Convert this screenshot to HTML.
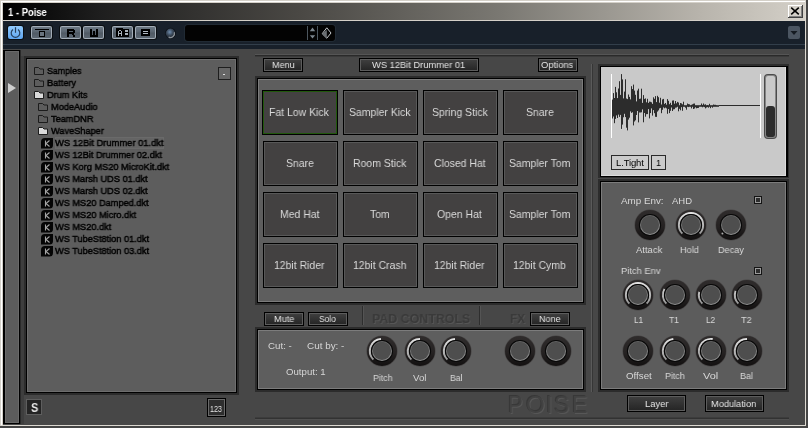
<!DOCTYPE html>
<html><head><meta charset="utf-8"><title>Poise</title>
<style>
html,body{margin:0;padding:0;}
body{width:808px;height:428px;overflow:hidden;position:relative;background:#d4d0c8;font-family:"Liberation Sans",sans-serif;}
div{position:absolute;}
.t{position:absolute;white-space:nowrap;transform-origin:0 0;will-change:transform;}
.k{position:absolute;}
</style></head><body>
<svg width="0" height="0" style="position:absolute"><defs>
<linearGradient id="ring" x1="0" y1="0" x2="0" y2="1"><stop offset="0" stop-color="#2f2c2c"/><stop offset="0.55" stop-color="#252222"/><stop offset="1" stop-color="#121010"/></linearGradient>
<linearGradient id="arc" gradientUnits="userSpaceOnUse" x1="0" y1="4" x2="0" y2="30"><stop offset="0" stop-color="#e6e6e6"/><stop offset="1" stop-color="#8a8a8a"/></linearGradient>
<linearGradient id="rim" x1="0" y1="0" x2="0.3" y2="1"><stop offset="0" stop-color="#606060"/><stop offset="1" stop-color="#8e8e8e"/></linearGradient>
</defs></svg>
<div style="left:1px;top:1px;width:806px;height:1px;background:#fff;"></div>
<div style="left:1px;top:1px;width:1px;height:426px;background:#fff;"></div>
<div style="left:805px;top:1px;width:1px;height:425px;background:#dcd8d0;"></div>
<div style="left:1px;top:425px;width:805px;height:1px;background:#dcd8d0;"></div>
<div style="left:806px;top:0px;width:2px;height:428px;background:#454545;"></div>
<div style="left:0px;top:426px;width:808px;height:2px;background:#454545;"></div>
<div style="left:3px;top:3px;width:802px;height:17px;background:linear-gradient(90deg,#000 0%,#1e1e1e 12%,#4a4844 37%,#7a7872 62%,#b8b4ac 87%,#d4d0c8 100%);"></div>
<span class="t" style="left:8.20px;top:6.69px;font-size:11px;line-height:11px;color:#fff;font-weight:bold;transform:scaleX(0.8577);">1 - Poise</span>
<div style="left:788px;top:5px;width:15px;height:13px;background:#404040;"></div>
<div style="left:788px;top:5px;width:14px;height:12px;background:#fff;"></div>
<div style="left:789px;top:6px;width:13px;height:11px;background:#808080;"></div>
<div style="left:789px;top:6px;width:12px;height:10px;background:#d4d0c8;"></div>
<svg class="k" style="left:790px;top:7px" width="10" height="8" viewBox="0 0 10 8"><path d="M1.2 0.6L8.8 7.4M8.8 0.6L1.2 7.4" stroke="#000" stroke-width="1.5"/></svg>
<div style="left:3px;top:21px;width:802px;height:28px;background:#18202a;"></div>
<div style="left:3px;top:44px;width:802px;height:1px;background:#323e4a;"></div>
<div style="left:7px;top:25px;width:17px;height:15px;background:#0a0e12;border-radius:3px;"></div>
<div style="left:8px;top:26px;width:15px;height:13px;background:linear-gradient(#92cafc,#5ea6f2);border-radius:2px;"></div>
<svg class="k" style="left:8px;top:26px" width="15" height="13" viewBox="0 0 15 13"><path d="M5 3.6A4.3 4.3 0 1 0 10 3.6" stroke="#26405e" stroke-width="1.2" fill="none"/><path d="M7.5 1.2V6.8" stroke="#26405e" stroke-width="1.2"/></svg>
<div style="left:30px;top:25px;width:23px;height:15px;background:#0a0e12;border-radius:3px;"></div>
<div style="left:31px;top:26px;width:21px;height:13px;background:#a2acb6;border-radius:2px;"></div>
<div style="left:32px;top:27px;width:19px;height:11px;background:linear-gradient(#6c7884 0%,#5a6570 45%,#505a64 55%,#5c6772 100%);border-radius:1px;"></div>
<svg class="k" style="left:0;top:0" width="808" height="60" viewBox="0 0 808 60" shape-rendering="crispEdges"><rect x="35" y="29" width="14" height="1" fill="#000"/><rect x="39" y="31" width="6" height="6" fill="#000"/></svg>
<svg class="k" style="left:0;top:0" width="808" height="60" viewBox="0 0 808 60" shape-rendering="crispEdges"><rect x="40" y="32" width="4" height="4" fill="#6a747e"/></svg>
<div style="left:59px;top:25px;width:23px;height:15px;background:#0a0e12;border-radius:3px;"></div>
<div style="left:60px;top:26px;width:21px;height:13px;background:#a2acb6;border-radius:2px;"></div>
<div style="left:61px;top:27px;width:19px;height:11px;background:linear-gradient(#6c7884 0%,#5a6570 45%,#505a64 55%,#5c6772 100%);border-radius:1px;"></div>
<svg class="k" style="left:0;top:0" width="808" height="60" viewBox="0 0 808 60" shape-rendering="crispEdges"><rect x="67" y="29" width="7" height="2" fill="#000"/><rect x="67" y="31" width="2" height="6" fill="#000"/><rect x="73" y="30" width="2" height="3" fill="#000"/><rect x="69" y="32" width="5" height="2" fill="#000"/><rect x="72" y="34" width="2" height="1" fill="#000"/><rect x="73" y="35" width="2" height="2" fill="#000"/></svg>
<div style="left:82px;top:25px;width:23px;height:15px;background:#0a0e12;border-radius:3px;"></div>
<div style="left:83px;top:26px;width:21px;height:13px;background:#a2acb6;border-radius:2px;"></div>
<div style="left:84px;top:27px;width:19px;height:11px;background:linear-gradient(#6c7884 0%,#5a6570 45%,#505a64 55%,#5c6772 100%);border-radius:1px;"></div>
<svg class="k" style="left:0;top:0" width="808" height="60" viewBox="0 0 808 60" shape-rendering="crispEdges"><rect x="90" y="29" width="2" height="8" fill="#000"/><rect x="96" y="29" width="2" height="8" fill="#000"/><rect x="93" y="31" width="2" height="5" fill="#000"/><rect x="90" y="35" width="8" height="2" fill="#000"/></svg>
<div style="left:111px;top:25px;width:23px;height:15px;background:#0a0e12;border-radius:3px;"></div>
<div style="left:112px;top:26px;width:21px;height:13px;background:#a2acb6;border-radius:2px;"></div>
<div style="left:113px;top:27px;width:19px;height:11px;background:linear-gradient(#6c7884 0%,#5a6570 45%,#505a64 55%,#5c6772 100%);border-radius:1px;"></div>
<svg class="k" style="left:0;top:0" width="808" height="60" viewBox="0 0 808 60" shape-rendering="crispEdges"><rect x="116" y="28" width="7" height="9" fill="#000"/><rect x="123" y="29" width="6" height="8" fill="#000"/></svg>
<svg class="k" style="left:0;top:0" width="808" height="60" viewBox="0 0 808 60" shape-rendering="crispEdges"><rect x="118" y="31" width="1" height="5" fill="#a8b0b8"/><rect x="121" y="31" width="1" height="5" fill="#a8b0b8"/><rect x="119" y="30" width="2" height="1" fill="#a8b0b8"/><rect x="118" y="33" width="4" height="1" fill="#a8b0b8"/><rect x="125" y="30" width="3" height="2" fill="#a8b0b8"/><rect x="125" y="33" width="3" height="2" fill="#a8b0b8"/></svg>
<div style="left:134px;top:25px;width:23px;height:15px;background:#0a0e12;border-radius:3px;"></div>
<div style="left:135px;top:26px;width:21px;height:13px;background:#a2acb6;border-radius:2px;"></div>
<div style="left:136px;top:27px;width:19px;height:11px;background:linear-gradient(#6c7884 0%,#5a6570 45%,#505a64 55%,#5c6772 100%);border-radius:1px;"></div>
<svg class="k" style="left:0;top:0" width="808" height="60" viewBox="0 0 808 60" shape-rendering="crispEdges"><rect x="141" y="29" width="9" height="7" fill="#000"/></svg>
<svg class="k" style="left:0;top:0" width="808" height="60" viewBox="0 0 808 60" shape-rendering="crispEdges"><rect x="143" y="31" width="5" height="1" fill="#b0b8c0"/><rect x="143" y="33" width="5" height="1" fill="#b0b8c0"/></svg>
<svg class="k" style="left:164px;top:27px" width="13" height="13" viewBox="0 0 13 13"><defs><radialGradient id="sph" cx="0.42" cy="0.38" r="0.62"><stop offset="0" stop-color="#6f8cae"/><stop offset="0.55" stop-color="#3a4858"/><stop offset="1" stop-color="#1e2630"/></radialGradient></defs><circle cx="6.5" cy="6.2" r="5.4" fill="#0c1016"/><circle cx="6.5" cy="6.2" r="4.7" fill="url(#sph)"/><path d="M10.3 5.2A4.1 4.1 0 0 1 4.6 10.1" stroke="#8c9298" stroke-width="1.3" fill="none"/></svg>
<div style="left:184px;top:24px;width:152px;height:18px;background:#202a34;border-radius:4px;"></div>
<div style="left:185px;top:25px;width:150px;height:16px;background:#030303;border-radius:3px;"></div>
<div style="left:307px;top:26px;width:1px;height:14px;background:#4c565e;"></div>
<div style="left:317px;top:26px;width:1px;height:14px;background:#4c565e;"></div>
<svg class="k" style="left:308px;top:26px" width="28" height="14" viewBox="0 0 28 14"><path d="M1.8 5.2L4.5 1.6L7.2 5.2ZM1.8 9.2L4.5 12.4L7.2 9.2Z" fill="#7c868e"/><path d="M14.2 7.7L18.8 12.2L23 7L18.8 1.8Z" stroke="#c4c8cc" stroke-width="1" fill="none"/><path d="M14.2 7.7L18.8 12.2L18.8 4Z" fill="#6a6e72"/></svg>
<div style="left:788px;top:26px;width:12px;height:13px;background:#4b5561;border-radius:2px;"></div>
<svg class="k" style="left:788px;top:26px" width="12" height="13" viewBox="0 0 12 13"><path d="M2.5 5H9.5L6 9Z" fill="#151b22"/></svg>
<div style="left:3px;top:49px;width:802px;height:376px;background:#474747;"></div>
<div style="left:3px;top:50px;width:17px;height:374px;background:#000;"></div>
<div style="left:5px;top:51px;width:14px;height:372px;background:#6a6a6a;"></div>
<div style="left:6px;top:52px;width:12px;height:370px;background:#5c5c5c;"></div>
<div style="left:20px;top:50px;width:1px;height:374px;background:#2a2a2a;"></div>
<div style="left:21px;top:56px;width:3px;height:368px;background:#3e3e3e;"></div>
<svg class="k" style="left:7px;top:82px" width="10" height="12" viewBox="0 0 10 12"><path d="M1 1L9 6L1 11Z" fill="#cfcfcf"/></svg>
<div style="left:24px;top:56px;width:215px;height:339px;background:#2c2c2c;"></div>
<div style="left:26px;top:58px;width:211px;height:335px;background:#000;"></div>
<div style="left:27px;top:59px;width:209px;height:333px;background:#6e6e6e;"></div>
<div style="left:28px;top:60px;width:207px;height:331px;background:#5d5d5d;"></div>
<div style="left:218px;top:67px;width:13px;height:13px;background:#1e1e1e;"></div>
<div style="left:219px;top:68px;width:11px;height:11px;background:#666;"></div>
<div style="left:223px;top:74px;width:2px;height:1px;background:#ddd;"></div>
<div style="left:55px;top:137px;width:109px;height:12px;background:#646464;box-shadow:inset 0 0 0 1px #6a6a6a;"></div>
<svg class="k" style="left:34px;top:67px" width="11" height="9" viewBox="0 0 11 9"><path d="M0.5 0.5H4.5L6 2H9.5V7.5H0.5Z" fill="none" stroke="#1c1c1c" stroke-width="1"/></svg>
<span class="t" style="left:46.70px;top:66.46px;font-size:9.5px;line-height:9.5px;color:#000;transform:scaleX(0.9307);-webkit-text-stroke:0.45px #000;">Samples</span>
<svg class="k" style="left:34px;top:79px" width="11" height="9" viewBox="0 0 11 9"><path d="M0.5 0.5H4.5L6 2H9.5V7.5H0.5Z" fill="none" stroke="#1c1c1c" stroke-width="1"/></svg>
<span class="t" style="left:46.70px;top:78.46px;font-size:9.5px;line-height:9.5px;color:#000;transform:scaleX(0.9684);-webkit-text-stroke:0.45px #000;">Battery</span>
<svg class="k" style="left:34px;top:91px" width="11" height="9" viewBox="0 0 11 9"><path d="M0.5 0.5H4.5L6 2H9.5V7.5H0.5Z" fill="#dadada" stroke="#1c1c1c" stroke-width="1"/></svg>
<span class="t" style="left:46.70px;top:90.46px;font-size:9.5px;line-height:9.5px;color:#000;transform:scaleX(0.9684);-webkit-text-stroke:0.45px #000;">Drum Kits</span>
<svg class="k" style="left:38px;top:103px" width="11" height="9" viewBox="0 0 11 9"><path d="M0.5 0.5H4.5L6 2H9.5V7.5H0.5Z" fill="none" stroke="#1c1c1c" stroke-width="1"/></svg>
<span class="t" style="left:50.70px;top:102.46px;font-size:9.5px;line-height:9.5px;color:#000;transform:scaleX(0.9684);-webkit-text-stroke:0.45px #000;">ModeAudio</span>
<svg class="k" style="left:38px;top:115px" width="11" height="9" viewBox="0 0 11 9"><path d="M0.5 0.5H4.5L6 2H9.5V7.5H0.5Z" fill="none" stroke="#1c1c1c" stroke-width="1"/></svg>
<span class="t" style="left:50.70px;top:114.46px;font-size:9.5px;line-height:9.5px;color:#000;transform:scaleX(0.9684);-webkit-text-stroke:0.45px #000;">TeamDNR</span>
<svg class="k" style="left:38px;top:127px" width="11" height="9" viewBox="0 0 11 9"><path d="M0.5 0.5H4.5L6 2H9.5V7.5H0.5Z" fill="#dadada" stroke="#1c1c1c" stroke-width="1"/></svg>
<span class="t" style="left:50.70px;top:126.46px;font-size:9.5px;line-height:9.5px;color:#000;transform:scaleX(0.9684);-webkit-text-stroke:0.45px #000;">WaveShaper</span>
<svg class="k" style="left:41px;top:138px" width="12" height="11" viewBox="0 0 12 11"><path d="M4 0H12V7A3.5 3.5 0 0 1 8.5 10.5H0V4A4 4 0 0 1 4 0Z" fill="#050505"/><path d="M4.5 2.5V8.5M8.5 2.5L5 5.5L8.5 8.5" stroke="#a4a4a4" stroke-width="1.1" fill="none"/></svg>
<span class="t" style="left:55.00px;top:138.46px;font-size:9.5px;line-height:9.5px;color:#000;transform:scaleX(0.9834);-webkit-text-stroke:0.45px #000;">WS 12Bit Drummer 01.dkt</span>
<svg class="k" style="left:41px;top:150px" width="12" height="11" viewBox="0 0 12 11"><path d="M4 0H12V7A3.5 3.5 0 0 1 8.5 10.5H0V4A4 4 0 0 1 4 0Z" fill="#050505"/><path d="M4.5 2.5V8.5M8.5 2.5L5 5.5L8.5 8.5" stroke="#a4a4a4" stroke-width="1.1" fill="none"/></svg>
<span class="t" style="left:55.00px;top:150.46px;font-size:9.5px;line-height:9.5px;color:#000;transform:scaleX(0.9684);-webkit-text-stroke:0.45px #000;">WS 12Bit Drummer 02.dkt</span>
<svg class="k" style="left:41px;top:162px" width="12" height="11" viewBox="0 0 12 11"><path d="M4 0H12V7A3.5 3.5 0 0 1 8.5 10.5H0V4A4 4 0 0 1 4 0Z" fill="#050505"/><path d="M4.5 2.5V8.5M8.5 2.5L5 5.5L8.5 8.5" stroke="#a4a4a4" stroke-width="1.1" fill="none"/></svg>
<span class="t" style="left:55.00px;top:162.46px;font-size:9.5px;line-height:9.5px;color:#000;transform:scaleX(0.9701);-webkit-text-stroke:0.45px #000;">WS Korg MS20 MicroKit.dkt</span>
<svg class="k" style="left:41px;top:174px" width="12" height="11" viewBox="0 0 12 11"><path d="M4 0H12V7A3.5 3.5 0 0 1 8.5 10.5H0V4A4 4 0 0 1 4 0Z" fill="#050505"/><path d="M4.5 2.5V8.5M8.5 2.5L5 5.5L8.5 8.5" stroke="#a4a4a4" stroke-width="1.1" fill="none"/></svg>
<span class="t" style="left:55.00px;top:174.46px;font-size:9.5px;line-height:9.5px;color:#000;transform:scaleX(0.9684);-webkit-text-stroke:0.45px #000;">WS Marsh UDS 01.dkt</span>
<svg class="k" style="left:41px;top:186px" width="12" height="11" viewBox="0 0 12 11"><path d="M4 0H12V7A3.5 3.5 0 0 1 8.5 10.5H0V4A4 4 0 0 1 4 0Z" fill="#050505"/><path d="M4.5 2.5V8.5M8.5 2.5L5 5.5L8.5 8.5" stroke="#a4a4a4" stroke-width="1.1" fill="none"/></svg>
<span class="t" style="left:55.00px;top:186.46px;font-size:9.5px;line-height:9.5px;color:#000;transform:scaleX(0.9684);-webkit-text-stroke:0.45px #000;">WS Marsh UDS 02.dkt</span>
<svg class="k" style="left:41px;top:198px" width="12" height="11" viewBox="0 0 12 11"><path d="M4 0H12V7A3.5 3.5 0 0 1 8.5 10.5H0V4A4 4 0 0 1 4 0Z" fill="#050505"/><path d="M4.5 2.5V8.5M8.5 2.5L5 5.5L8.5 8.5" stroke="#a4a4a4" stroke-width="1.1" fill="none"/></svg>
<span class="t" style="left:55.00px;top:198.46px;font-size:9.5px;line-height:9.5px;color:#000;transform:scaleX(0.9684);-webkit-text-stroke:0.45px #000;">WS MS20 Damped.dkt</span>
<svg class="k" style="left:41px;top:210px" width="12" height="11" viewBox="0 0 12 11"><path d="M4 0H12V7A3.5 3.5 0 0 1 8.5 10.5H0V4A4 4 0 0 1 4 0Z" fill="#050505"/><path d="M4.5 2.5V8.5M8.5 2.5L5 5.5L8.5 8.5" stroke="#a4a4a4" stroke-width="1.1" fill="none"/></svg>
<span class="t" style="left:55.00px;top:210.46px;font-size:9.5px;line-height:9.5px;color:#000;transform:scaleX(0.9684);-webkit-text-stroke:0.45px #000;">WS MS20 Micro.dkt</span>
<svg class="k" style="left:41px;top:222px" width="12" height="11" viewBox="0 0 12 11"><path d="M4 0H12V7A3.5 3.5 0 0 1 8.5 10.5H0V4A4 4 0 0 1 4 0Z" fill="#050505"/><path d="M4.5 2.5V8.5M8.5 2.5L5 5.5L8.5 8.5" stroke="#a4a4a4" stroke-width="1.1" fill="none"/></svg>
<span class="t" style="left:55.00px;top:222.46px;font-size:9.5px;line-height:9.5px;color:#000;transform:scaleX(0.9684);-webkit-text-stroke:0.45px #000;">WS MS20.dkt</span>
<svg class="k" style="left:41px;top:234px" width="12" height="11" viewBox="0 0 12 11"><path d="M4 0H12V7A3.5 3.5 0 0 1 8.5 10.5H0V4A4 4 0 0 1 4 0Z" fill="#050505"/><path d="M4.5 2.5V8.5M8.5 2.5L5 5.5L8.5 8.5" stroke="#a4a4a4" stroke-width="1.1" fill="none"/></svg>
<span class="t" style="left:55.00px;top:234.46px;font-size:9.5px;line-height:9.5px;color:#000;transform:scaleX(0.9684);-webkit-text-stroke:0.45px #000;">WS TubeSt8tion 01.dkt</span>
<svg class="k" style="left:41px;top:246px" width="12" height="11" viewBox="0 0 12 11"><path d="M4 0H12V7A3.5 3.5 0 0 1 8.5 10.5H0V4A4 4 0 0 1 4 0Z" fill="#050505"/><path d="M4.5 2.5V8.5M8.5 2.5L5 5.5L8.5 8.5" stroke="#a4a4a4" stroke-width="1.1" fill="none"/></svg>
<span class="t" style="left:55.00px;top:246.46px;font-size:9.5px;line-height:9.5px;color:#000;transform:scaleX(0.9684);-webkit-text-stroke:0.45px #000;">WS TubeSt8tion 03.dkt</span>
<div style="left:26px;top:399px;width:16px;height:16px;background:#5e5e5e;"></div>
<div style="left:27px;top:400px;width:14px;height:14px;background:#242424;"></div>
<span class="t" style="left:30.50px;top:401.64px;font-size:12px;line-height:12px;color:#e6e6e6;font-weight:bold;transform:scaleX(0.9120);">S</span>
<div style="left:207px;top:398px;width:19px;height:19px;background:#000;"></div>
<div style="left:208px;top:399px;width:17px;height:17px;background:#6a6a6a;"></div>
<div style="left:209px;top:400px;width:15px;height:15px;background:#2e2e2e;"></div>
<span class="t" style="left:210.30px;top:403.76px;font-size:9.5px;line-height:9.5px;color:#e8e8e8;transform:scaleX(0.7572);">123</span>
<div style="left:255px;top:54px;width:534px;height:1px;background:#555;"></div>
<div style="left:255px;top:55px;width:534px;height:1px;background:#2a2a2a;"></div>
<div style="left:255px;top:56px;width:534px;height:1px;background:#3a3a3a;"></div>
<div style="left:263px;top:58px;width:40px;height:14px;background:#000;"></div>
<div style="left:264px;top:59px;width:38px;height:12px;background:#5c5c5c;"></div>
<div style="left:265px;top:60px;width:36px;height:10px;background:linear-gradient(#3e3e3e,#262626);"></div>
<span class="t" style="left:271.60px;top:60.46px;font-size:9.5px;line-height:9.5px;color:#e4e4e4;transform:scaleX(0.9511);">Menu</span>
<div style="left:359px;top:58px;width:120px;height:14px;background:#000;"></div>
<div style="left:360px;top:59px;width:118px;height:12px;background:#5c5c5c;"></div>
<div style="left:361px;top:60px;width:116px;height:10px;background:linear-gradient(#3e3e3e,#262626);"></div>
<span class="t" style="left:372.30px;top:60.46px;font-size:9.5px;line-height:9.5px;color:#e4e4e4;transform:scaleX(0.9809);">WS 12Bit Drummer 01</span>
<div style="left:538px;top:58px;width:40px;height:14px;background:#000;"></div>
<div style="left:539px;top:59px;width:38px;height:12px;background:#5c5c5c;"></div>
<div style="left:540px;top:60px;width:36px;height:10px;background:linear-gradient(#3e3e3e,#262626);"></div>
<span class="t" style="left:541.30px;top:60.46px;font-size:9.5px;line-height:9.5px;color:#e4e4e4;transform:scaleX(0.9836);">Options</span>
<div style="left:255px;top:76px;width:331px;height:229px;background:#2c2c2c;"></div>
<div style="left:257px;top:78px;width:327px;height:225px;background:#000;"></div>
<div style="left:258px;top:79px;width:325px;height:223px;background:#7c7c7c;"></div>
<div style="left:259px;top:80px;width:323px;height:221px;background:#5e5e5e;"></div>
<div style="left:262px;top:90px;width:76px;height:45px;background:#000;"></div>
<div style="left:263px;top:91px;width:74px;height:43px;background:#21580c;"></div>
<div style="left:264px;top:92px;width:72px;height:41px;background:#434141;"></div>
<span class="t" style="left:269.29px;top:106.69px;font-size:11px;line-height:11px;color:#dadada;transform:scaleX(0.9500);">Fat Low Kick</span>
<div style="left:343px;top:90px;width:75px;height:45px;background:#000;"></div>
<div style="left:344px;top:91px;width:73px;height:43px;background:#585858;"></div>
<div style="left:345px;top:92px;width:71px;height:41px;background:#434141;"></div>
<span class="t" style="left:348.92px;top:106.69px;font-size:11px;line-height:11px;color:#dadada;transform:scaleX(0.9500);">Sampler Kick</span>
<div style="left:423px;top:90px;width:75px;height:45px;background:#000;"></div>
<div style="left:424px;top:91px;width:73px;height:43px;background:#585858;"></div>
<div style="left:425px;top:92px;width:71px;height:41px;background:#434141;"></div>
<span class="t" style="left:431.82px;top:106.69px;font-size:11px;line-height:11px;color:#dadada;transform:scaleX(0.9500);">Spring Stick</span>
<div style="left:503px;top:90px;width:75px;height:45px;background:#000;"></div>
<div style="left:504px;top:91px;width:73px;height:43px;background:#585858;"></div>
<div style="left:505px;top:92px;width:71px;height:41px;background:#434141;"></div>
<span class="t" style="left:525.76px;top:106.69px;font-size:11px;line-height:11px;color:#dadada;transform:scaleX(0.9500);">Snare</span>
<div style="left:263px;top:141px;width:75px;height:45px;background:#000;"></div>
<div style="left:264px;top:142px;width:73px;height:43px;background:#585858;"></div>
<div style="left:265px;top:143px;width:71px;height:41px;background:#434141;"></div>
<span class="t" style="left:285.76px;top:157.69px;font-size:11px;line-height:11px;color:#dadada;transform:scaleX(0.9500);">Snare</span>
<div style="left:343px;top:141px;width:75px;height:45px;background:#000;"></div>
<div style="left:344px;top:142px;width:73px;height:43px;background:#585858;"></div>
<div style="left:345px;top:143px;width:71px;height:41px;background:#434141;"></div>
<span class="t" style="left:352.99px;top:157.69px;font-size:11px;line-height:11px;color:#dadada;transform:scaleX(0.9500);">Room Stick</span>
<div style="left:423px;top:141px;width:75px;height:45px;background:#000;"></div>
<div style="left:424px;top:142px;width:73px;height:43px;background:#585858;"></div>
<div style="left:425px;top:143px;width:71px;height:41px;background:#434141;"></div>
<span class="t" style="left:433.85px;top:157.69px;font-size:11px;line-height:11px;color:#dadada;transform:scaleX(0.9500);">Closed Hat</span>
<div style="left:503px;top:141px;width:75px;height:45px;background:#000;"></div>
<div style="left:504px;top:142px;width:73px;height:43px;background:#585858;"></div>
<div style="left:505px;top:143px;width:71px;height:41px;background:#434141;"></div>
<span class="t" style="left:509.02px;top:157.69px;font-size:11px;line-height:11px;color:#dadada;transform:scaleX(0.9500);">Sampler Tom</span>
<div style="left:263px;top:192px;width:75px;height:45px;background:#000;"></div>
<div style="left:264px;top:193px;width:73px;height:43px;background:#585858;"></div>
<div style="left:265px;top:194px;width:71px;height:41px;background:#434141;"></div>
<span class="t" style="left:279.95px;top:208.69px;font-size:11px;line-height:11px;color:#dadada;transform:scaleX(0.9500);">Med Hat</span>
<div style="left:343px;top:192px;width:75px;height:45px;background:#000;"></div>
<div style="left:344px;top:193px;width:73px;height:43px;background:#585858;"></div>
<div style="left:345px;top:194px;width:71px;height:41px;background:#434141;"></div>
<span class="t" style="left:369.83px;top:208.69px;font-size:11px;line-height:11px;color:#dadada;transform:scaleX(0.9500);">Tom</span>
<div style="left:423px;top:192px;width:75px;height:45px;background:#000;"></div>
<div style="left:424px;top:193px;width:73px;height:43px;background:#585858;"></div>
<div style="left:425px;top:194px;width:71px;height:41px;background:#434141;"></div>
<span class="t" style="left:437.34px;top:208.69px;font-size:11px;line-height:11px;color:#dadada;transform:scaleX(0.9500);">Open Hat</span>
<div style="left:503px;top:192px;width:75px;height:45px;background:#000;"></div>
<div style="left:504px;top:193px;width:73px;height:43px;background:#585858;"></div>
<div style="left:505px;top:194px;width:71px;height:41px;background:#434141;"></div>
<span class="t" style="left:509.02px;top:208.69px;font-size:11px;line-height:11px;color:#dadada;transform:scaleX(0.9500);">Sampler Tom</span>
<div style="left:263px;top:243px;width:75px;height:45px;background:#000;"></div>
<div style="left:264px;top:244px;width:73px;height:43px;background:#585858;"></div>
<div style="left:265px;top:245px;width:71px;height:41px;background:#434141;"></div>
<span class="t" style="left:274.43px;top:259.69px;font-size:11px;line-height:11px;color:#dadada;transform:scaleX(0.9500);">12bit Rider</span>
<div style="left:343px;top:243px;width:75px;height:45px;background:#000;"></div>
<div style="left:344px;top:244px;width:73px;height:43px;background:#585858;"></div>
<div style="left:345px;top:245px;width:71px;height:41px;background:#434141;"></div>
<span class="t" style="left:352.98px;top:259.69px;font-size:11px;line-height:11px;color:#dadada;transform:scaleX(0.9500);">12bit Crash</span>
<div style="left:423px;top:243px;width:75px;height:45px;background:#000;"></div>
<div style="left:424px;top:244px;width:73px;height:43px;background:#585858;"></div>
<div style="left:425px;top:245px;width:71px;height:41px;background:#434141;"></div>
<span class="t" style="left:434.43px;top:259.69px;font-size:11px;line-height:11px;color:#dadada;transform:scaleX(0.9500);">12bit Rider</span>
<div style="left:503px;top:243px;width:75px;height:45px;background:#000;"></div>
<div style="left:504px;top:244px;width:73px;height:43px;background:#585858;"></div>
<div style="left:505px;top:245px;width:71px;height:41px;background:#434141;"></div>
<span class="t" style="left:513.28px;top:259.69px;font-size:11px;line-height:11px;color:#dadada;transform:scaleX(0.9500);">12bit Cymb</span>
<div style="left:264px;top:312px;width:40px;height:14px;background:#000;"></div>
<div style="left:265px;top:313px;width:38px;height:12px;background:#5c5c5c;"></div>
<div style="left:266px;top:314px;width:36px;height:10px;background:linear-gradient(#3e3e3e,#262626);"></div>
<span class="t" style="left:273.60px;top:314.46px;font-size:9.5px;line-height:9.5px;color:#e4e4e4;transform:scaleX(0.9660);">Mute</span>
<div style="left:308px;top:312px;width:40px;height:14px;background:#000;"></div>
<div style="left:309px;top:313px;width:38px;height:12px;background:#5c5c5c;"></div>
<div style="left:310px;top:314px;width:36px;height:10px;background:linear-gradient(#3e3e3e,#262626);"></div>
<span class="t" style="left:318.80px;top:314.46px;font-size:9.5px;line-height:9.5px;color:#e4e4e4;transform:scaleX(0.8888);">Solo</span>
<div style="left:362px;top:306px;width:1px;height:19px;background:#2e2e2e;"></div>
<div style="left:363px;top:306px;width:1px;height:19px;background:#545454;"></div>
<div style="left:479px;top:306px;width:1px;height:19px;background:#2e2e2e;"></div>
<div style="left:480px;top:306px;width:1px;height:19px;background:#545454;"></div>
<span class="t" style="left:371.50px;top:312.40px;font-size:13px;line-height:13px;color:#3a3a3a;font-weight:bold;transform:scaleX(0.9540);text-shadow:1px 1px 0 #565656;">PAD CONTROLS</span>
<span class="t" style="left:510.00px;top:312.40px;font-size:13px;line-height:13px;color:#3a3a3a;font-weight:bold;transform:scaleX(0.9030);text-shadow:1px 1px 0 #565656;">FX</span>
<div style="left:530px;top:312px;width:40px;height:14px;background:#000;"></div>
<div style="left:531px;top:313px;width:38px;height:12px;background:#5c5c5c;"></div>
<div style="left:532px;top:314px;width:36px;height:10px;background:linear-gradient(#3e3e3e,#262626);"></div>
<span class="t" style="left:538.60px;top:313.96px;font-size:9.5px;line-height:9.5px;color:#e4e4e4;transform:scaleX(0.9467);">None</span>
<div style="left:255px;top:327px;width:331px;height:65px;background:#2c2c2c;"></div>
<div style="left:257px;top:329px;width:327px;height:61px;background:#000;"></div>
<div style="left:258px;top:330px;width:325px;height:59px;background:#7c7c7c;"></div>
<div style="left:259px;top:331px;width:323px;height:57px;background:#5e5e5e;"></div>
<span class="t" style="left:267.60px;top:341.46px;font-size:9.5px;line-height:9.5px;color:#d6d6d6;transform:scaleX(1.0248);">Cut: -</span>
<span class="t" style="left:306.60px;top:341.46px;font-size:9.5px;line-height:9.5px;color:#d6d6d6;transform:scaleX(1.0419);">Cut by: -</span>
<span class="t" style="left:285.60px;top:367.46px;font-size:9.5px;line-height:9.5px;color:#d6d6d6;transform:scaleX(1.0159);">Output: 1</span>
<svg class="k" style="left:365.4px;top:334.3px" width="34" height="34" viewBox="0 0 34 34"><circle cx="17" cy="17" r="15.6" fill="#3a3737" opacity="0.6"/><circle cx="17" cy="17" r="15" fill="url(#ring)"/><path d="M8.44 25.56 A12.1 12.1 0 0 1 15.95 4.95" stroke="url(#arc)" stroke-width="2" fill="none" stroke-linecap="butt"/><circle cx="17" cy="17" r="11.1" fill="#080808"/><circle cx="17" cy="17" r="10" fill="url(#rim)"/><circle cx="17" cy="16.8" r="9.1" fill="#4e4e4e"/></svg>
<span class="t" style="left:372.60px;top:373.46px;font-size:9.5px;line-height:9.5px;color:#d6d6d6;transform:scaleX(0.9280);">Pitch</span>
<svg class="k" style="left:402.7px;top:334.3px" width="34" height="34" viewBox="0 0 34 34"><circle cx="17" cy="17" r="15.6" fill="#3a3737" opacity="0.6"/><circle cx="17" cy="17" r="15" fill="url(#ring)"/><path d="M8.44 25.56 A12.1 12.1 0 0 1 17.00 4.90" stroke="url(#arc)" stroke-width="2" fill="none" stroke-linecap="butt"/><circle cx="17" cy="17" r="11.1" fill="#080808"/><circle cx="17" cy="17" r="10" fill="url(#rim)"/><circle cx="17" cy="16.8" r="9.1" fill="#4e4e4e"/></svg>
<span class="t" style="left:412.70px;top:373.46px;font-size:9.5px;line-height:9.5px;color:#d6d6d6;transform:scaleX(1.0147);">Vol</span>
<svg class="k" style="left:439.2px;top:334.3px" width="34" height="34" viewBox="0 0 34 34"><circle cx="17" cy="17" r="15.6" fill="#3a3737" opacity="0.6"/><circle cx="17" cy="17" r="15" fill="url(#ring)"/><path d="M8.44 25.56 A12.1 12.1 0 0 1 15.95 4.95" stroke="url(#arc)" stroke-width="2" fill="none" stroke-linecap="butt"/><circle cx="17" cy="17" r="11.1" fill="#080808"/><circle cx="17" cy="17" r="10" fill="url(#rim)"/><circle cx="17" cy="16.8" r="9.1" fill="#4e4e4e"/></svg>
<span class="t" style="left:449.90px;top:373.46px;font-size:9.5px;line-height:9.5px;color:#d6d6d6;transform:scaleX(0.9177);">Bal</span>
<svg class="k" style="left:502.70000000000005px;top:334.3px" width="34" height="34" viewBox="0 0 34 34"><circle cx="17" cy="17" r="15.6" fill="#3a3737" opacity="0.6"/><circle cx="17" cy="17" r="15" fill="url(#ring)"/><circle cx="17" cy="17" r="11.1" fill="#080808"/><circle cx="17" cy="17" r="10" fill="url(#rim)"/><circle cx="17" cy="16.8" r="9.1" fill="#4e4e4e"/></svg>
<svg class="k" style="left:539px;top:334.3px" width="34" height="34" viewBox="0 0 34 34"><circle cx="17" cy="17" r="15.6" fill="#3a3737" opacity="0.6"/><circle cx="17" cy="17" r="15" fill="url(#ring)"/><circle cx="17" cy="17" r="11.1" fill="#080808"/><circle cx="17" cy="17" r="10" fill="url(#rim)"/><circle cx="17" cy="16.8" r="9.1" fill="#4e4e4e"/></svg>
<span class="t" style="left:508.20px;top:392.68px;font-size:24px;line-height:24px;color:#424242;transform:scaleX(0.9245);text-shadow:-1px -1px 0 #383838,1px 1px 0 #575757;">P</span>
<span class="t" style="left:525.80px;top:392.68px;font-size:24px;line-height:24px;color:#424242;transform:scaleX(1.0125);text-shadow:-1px -1px 0 #383838,1px 1px 0 #575757;">O</span>
<span class="t" style="left:545.80px;top:392.68px;font-size:24px;line-height:24px;color:#424242;transform:scaleX(0.9599);text-shadow:-1px -1px 0 #383838,1px 1px 0 #575757;">I</span>
<span class="t" style="left:554.10px;top:392.68px;font-size:24px;line-height:24px;color:#424242;transform:scaleX(0.9557);text-shadow:-1px -1px 0 #383838,1px 1px 0 #575757;">S</span>
<span class="t" style="left:572.30px;top:392.68px;font-size:24px;line-height:24px;color:#424242;transform:scaleX(0.9620);text-shadow:-1px -1px 0 #383838,1px 1px 0 #575757;">E</span>
<div style="left:255px;top:417px;width:534px;height:1px;background:#3c3c3c;"></div>
<div style="left:255px;top:418px;width:534px;height:1px;background:#323232;"></div>
<div style="left:255px;top:419px;width:534px;height:1px;background:#505050;"></div>
<div style="left:591px;top:64px;width:1px;height:328px;background:#5a5a5a;"></div>
<div style="left:592px;top:64px;width:1px;height:328px;background:#363636;"></div>
<div style="left:598px;top:64px;width:191px;height:114px;background:#2e2e2e;"></div>
<div style="left:600px;top:66px;width:188px;height:111px;background:#000;"></div>
<div style="left:601px;top:67px;width:185px;height:109px;background:#dcdcdc;"></div>
<div style="left:601px;top:67px;width:184px;height:108px;background:#c9c9c9;"></div>
<div style="left:611px;top:74px;width:1px;height:64px;background:#fff;"></div>
<div style="left:760px;top:74px;width:1px;height:64px;background:#fff;"></div>
<svg class="k" style="left:0px;top:0px" width="808" height="428" viewBox="0 0 808 428"><path d="M612.5 99.6V118.5M613.5 93.1V116.5M614.5 98.0V123.2M615.5 86.9V118.9M616.5 92.3V115.4M617.5 98.1V118.0M618.5 88.5V114.6M619.5 81.2V116.9M620.5 94.9V114.9M621.5 74.1V128.9M622.5 79.4V124.6M623.5 98.4V117.3M624.5 91.6V113.8M625.5 79.3V117.1M626.5 98.5V127.7M627.5 99.1V130.4M628.5 94.5V119.6M629.5 96.9V117.7M630.5 99.4V111.4M631.5 86.2V112.9M632.5 89.0V112.3M633.5 84.6V125.4M634.5 90.6V121.5M635.5 94.8V120.3M636.5 101.4V115.0M637.5 90.5V111.0M638.5 88.7V122.4M639.5 98.9V112.5M640.5 98.6V112.5M641.5 88.7V112.3M642.5 102.9V109.4M643.5 95.1V122.3M644.5 98.9V113.0M645.5 98.4V116.7M646.5 102.3V114.2M647.5 98.8V114.1M648.5 102.9V109.1M649.5 101.6V118.4M650.5 101.8V113.1M651.5 102.3V108.4M652.5 103.9V115.6M653.5 97.3V110.1M654.5 98.8V113.2M655.5 96.1V116.8M656.5 102.1V116.9M657.5 95.8V111.6M658.5 97.2V110.4M659.5 102.7V108.4M660.5 97.8V107.9M661.5 104.5V113.2M662.5 99.4V109.8M663.5 98.9V107.4M664.5 103.9V108.3M665.5 103.0V107.6M666.5 104.7V108.4M667.5 99.1V113.8M668.5 100.8V109.1M669.5 104.2V113.1M670.5 102.8V110.8M671.5 105.0V107.5M672.5 100.6V111.0M673.5 100.4V109.4M674.5 103.7V109.2M675.5 101.0V107.7M676.5 103.3V107.5M677.5 101.9V106.8M678.5 102.5V111.3M679.5 105.2V108.8M680.5 103.0V110.3M681.5 103.4V107.2M682.5 104.3V110.8M683.5 101.7V106.8M684.5 105.2V106.8M685.5 105.2V107.7M686.5 105.2V109.7M687.5 103.5V106.8M688.5 104.1V107.1M689.5 104.3V106.8M690.5 105.2V106.8M691.5 104.8V108.4M692.5 104.3V106.8M693.5 103.7V109.0M694.5 103.5V108.5M695.5 105.2V107.3M696.5 105.2V108.3M697.5 105.2V108.0M698.5 105.2V107.9M699.5 105.2V106.8M700.5 105.1V106.8M701.5 103.5V106.8M702.5 104.9V107.3M703.5 103.5V106.8M704.5 104.7V107.1M705.5 104.3V108.4M706.5 105.2V107.5M707.5 105.0V107.1M708.5 105.2V107.7M709.5 103.8V106.8M710.5 105.2V108.2M711.5 105.2V106.8M712.5 105.2V107.7M713.5 104.5V106.8M714.5 104.8V106.8M715.5 104.8V106.8M716.5 105.1V106.8M717.5 105.2V106.8M718.5 105.2V106.8M719 105.5H720M720 105.5H721M721 105.5H722M722 105.5H723M723 105.5H724M724 105.5H725M725 105.5H726M726 105.5H727M727 105.5H728M728 105.5H729M729 105.5H730M730 105.5H731M731 105.5H732M732 105.5H733M733 105.5H734M734 105.5H735M735 105.5H736M736 105.5H737M737 105.5H738M738 105.5H739M739 105.5H740M740 105.5H741M741 105.5H742M742 105.5H743M743 105.5H744M744 105.5H745M745 105.5H746M746 105.5H747M747 105.5H748M748 105.5H749M749 105.5H750M750 105.5H751M751 105.5H752M752 105.5H753M753 105.5H754M754 105.5H755M755 105.5H756M756 105.5H757M757 105.5H758M758 105.5H759M759 105.5H760" stroke="#2c2c2c" stroke-width="1" fill="none"/></svg>
<div style="left:764px;top:74px;width:13px;height:65px;background:#4a4a4a;border-radius:4px;"></div>
<div style="left:765px;top:75px;width:11px;height:63px;background:#858585;border-radius:3px;"></div>
<div style="left:766px;top:76px;width:9px;height:61px;background:#c9c9c9;border-radius:2px;"></div>
<div style="left:766px;top:106px;width:9px;height:31px;background:#2c2c2c;border-radius:3px 3px 2px 2px;"></div>
<div style="left:611px;top:155px;width:38px;height:15px;background:#2a2a2a;"></div>
<div style="left:612px;top:156px;width:36px;height:13px;background:#cbcbcb;"></div>
<span class="t" style="left:615.60px;top:158.46px;font-size:9.5px;line-height:9.5px;color:#000;letter-spacing:-0.148px;">L.Tight</span>
<div style="left:651px;top:155px;width:15px;height:15px;background:#2a2a2a;"></div>
<div style="left:652px;top:156px;width:13px;height:13px;background:#cbcbcb;"></div>
<span class="t" style="left:655.80px;top:158.46px;font-size:9.5px;line-height:9.5px;color:#000;transform:scaleX(0.9465);">1</span>
<div style="left:598px;top:179px;width:191px;height:213px;background:#2c2c2c;"></div>
<div style="left:600px;top:181px;width:187px;height:209px;background:#000;"></div>
<div style="left:601px;top:182px;width:185px;height:207px;background:#7c7c7c;"></div>
<div style="left:602px;top:183px;width:183px;height:205px;background:#5c5c5c;"></div>
<span class="t" style="left:620.90px;top:195.96px;font-size:9.5px;line-height:9.5px;color:#d8d8d8;transform:scaleX(1.0345);">Amp Env:</span>
<span class="t" style="left:671.80px;top:195.96px;font-size:9.5px;line-height:9.5px;color:#d8d8d8;transform:scaleX(0.9971);">AHD</span>
<span class="t" style="left:620.60px;top:266.16px;font-size:9.5px;line-height:9.5px;color:#d8d8d8;transform:scaleX(0.9843);">Pitch Env</span>
<div style="left:754px;top:196px;width:8px;height:8px;background:#141414;"></div>
<div style="left:755px;top:197px;width:6px;height:6px;background:#9a9a9a;"></div>
<div style="left:756px;top:198px;width:4px;height:4px;background:#2e2e2e;"></div>
<div style="left:754px;top:267px;width:8px;height:8px;background:#141414;"></div>
<div style="left:755px;top:268px;width:6px;height:6px;background:#9a9a9a;"></div>
<div style="left:756px;top:269px;width:4px;height:4px;background:#2e2e2e;"></div>
<svg class="k" style="left:632.6px;top:208.2px" width="34" height="34" viewBox="0 0 34 34"><circle cx="17" cy="17" r="15.6" fill="#3a3737" opacity="0.6"/><circle cx="17" cy="17" r="15" fill="url(#ring)"/><circle cx="17" cy="17" r="11.1" fill="#080808"/><circle cx="17" cy="17" r="10" fill="url(#rim)"/><circle cx="17" cy="16.8" r="9.1" fill="#4e4e4e"/></svg>
<span class="t" style="left:635.70px;top:245.46px;font-size:9.5px;line-height:9.5px;color:#d8d8d8;transform:scaleX(0.9925);">Attack</span>
<svg class="k" style="left:673.5px;top:208.2px" width="34" height="34" viewBox="0 0 34 34"><circle cx="17" cy="17" r="15.6" fill="#3a3737" opacity="0.6"/><circle cx="17" cy="17" r="15" fill="url(#ring)"/><path d="M8.44 25.56 A12.1 12.1 0 1 1 25.56 25.56" stroke="url(#arc)" stroke-width="2" fill="none" stroke-linecap="butt"/><circle cx="17" cy="17" r="11.1" fill="#080808"/><circle cx="17" cy="17" r="10" fill="url(#rim)"/><circle cx="17" cy="16.8" r="9.1" fill="#4e4e4e"/></svg>
<span class="t" style="left:680.30px;top:245.46px;font-size:9.5px;line-height:9.5px;color:#d8d8d8;transform:scaleX(0.9623);">Hold</span>
<svg class="k" style="left:714.2px;top:208.2px" width="34" height="34" viewBox="0 0 34 34"><circle cx="17" cy="17" r="15.6" fill="#3a3737" opacity="0.6"/><circle cx="17" cy="17" r="15" fill="url(#ring)"/><circle cx="8.44" cy="25.56" r="1" fill="#b0b0b0"/><circle cx="17" cy="17" r="11.1" fill="#080808"/><circle cx="17" cy="17" r="10" fill="url(#rim)"/><circle cx="17" cy="16.8" r="9.1" fill="#4e4e4e"/></svg>
<span class="t" style="left:717.90px;top:245.46px;font-size:9.5px;line-height:9.5px;color:#d8d8d8;transform:scaleX(0.9582);">Decay</span>
<svg class="k" style="left:621.2px;top:277.9px" width="34" height="34" viewBox="0 0 34 34"><circle cx="17" cy="17" r="15.6" fill="#3a3737" opacity="0.6"/><circle cx="17" cy="17" r="15" fill="url(#ring)"/><path d="M8.44 25.56 A12.1 12.1 0 1 1 25.56 25.56" stroke="url(#arc)" stroke-width="2" fill="none" stroke-linecap="butt"/><circle cx="17" cy="17" r="11.1" fill="#080808"/><circle cx="17" cy="17" r="10" fill="url(#rim)"/><circle cx="17" cy="16.8" r="9.1" fill="#4e4e4e"/></svg>
<span class="t" style="left:633.70px;top:315.26px;font-size:9.5px;line-height:9.5px;color:#d8d8d8;transform:scaleX(0.8613);">L1</span>
<svg class="k" style="left:657.5px;top:277.9px" width="34" height="34" viewBox="0 0 34 34"><circle cx="17" cy="17" r="15.6" fill="#3a3737" opacity="0.6"/><circle cx="17" cy="17" r="15" fill="url(#ring)"/><path d="M8.44 25.56 A12.1 12.1 0 0 1 6.52 10.95" stroke="url(#arc)" stroke-width="2" fill="none" stroke-linecap="butt"/><circle cx="17" cy="17" r="11.1" fill="#080808"/><circle cx="17" cy="17" r="10" fill="url(#rim)"/><circle cx="17" cy="16.8" r="9.1" fill="#4e4e4e"/></svg>
<span class="t" style="left:669.20px;top:315.26px;font-size:9.5px;line-height:9.5px;color:#d8d8d8;transform:scaleX(0.9021);">T1</span>
<svg class="k" style="left:693.5px;top:277.9px" width="34" height="34" viewBox="0 0 34 34"><circle cx="17" cy="17" r="15.6" fill="#3a3737" opacity="0.6"/><circle cx="17" cy="17" r="15" fill="url(#ring)"/><path d="M8.44 25.56 A12.1 12.1 0 0 1 5.31 13.87" stroke="url(#arc)" stroke-width="2" fill="none" stroke-linecap="butt"/><circle cx="17" cy="17" r="11.1" fill="#080808"/><circle cx="17" cy="17" r="10" fill="url(#rim)"/><circle cx="17" cy="16.8" r="9.1" fill="#4e4e4e"/></svg>
<span class="t" style="left:705.60px;top:315.26px;font-size:9.5px;line-height:9.5px;color:#d8d8d8;transform:scaleX(0.8613);">L2</span>
<svg class="k" style="left:729.7px;top:277.9px" width="34" height="34" viewBox="0 0 34 34"><circle cx="17" cy="17" r="15.6" fill="#3a3737" opacity="0.6"/><circle cx="17" cy="17" r="15" fill="url(#ring)"/><path d="M8.44 25.56 A12.1 12.1 0 0 1 5.63 12.86" stroke="url(#arc)" stroke-width="2" fill="none" stroke-linecap="butt"/><circle cx="17" cy="17" r="11.1" fill="#080808"/><circle cx="17" cy="17" r="10" fill="url(#rim)"/><circle cx="17" cy="16.8" r="9.1" fill="#4e4e4e"/></svg>
<span class="t" style="left:741.10px;top:315.26px;font-size:9.5px;line-height:9.5px;color:#d8d8d8;transform:scaleX(0.9652);">T2</span>
<svg class="k" style="left:621.2px;top:334.1px" width="34" height="34" viewBox="0 0 34 34"><circle cx="17" cy="17" r="15.6" fill="#3a3737" opacity="0.6"/><circle cx="17" cy="17" r="15" fill="url(#ring)"/><circle cx="17" cy="17" r="11.1" fill="#080808"/><circle cx="17" cy="17" r="10" fill="url(#rim)"/><circle cx="17" cy="16.8" r="9.1" fill="#4e4e4e"/></svg>
<span class="t" style="left:625.80px;top:370.86px;font-size:9.5px;line-height:9.5px;color:#d8d8d8;transform:scaleX(1.0251);">Offset</span>
<svg class="k" style="left:657.5px;top:334.1px" width="34" height="34" viewBox="0 0 34 34"><circle cx="17" cy="17" r="15.6" fill="#3a3737" opacity="0.6"/><circle cx="17" cy="17" r="15" fill="url(#ring)"/><path d="M8.44 25.56 A12.1 12.1 0 0 1 15.32 5.02" stroke="url(#arc)" stroke-width="2" fill="none" stroke-linecap="butt"/><circle cx="17" cy="17" r="11.1" fill="#080808"/><circle cx="17" cy="17" r="10" fill="url(#rim)"/><circle cx="17" cy="16.8" r="9.1" fill="#4e4e4e"/></svg>
<span class="t" style="left:664.60px;top:370.86px;font-size:9.5px;line-height:9.5px;color:#d8d8d8;transform:scaleX(0.9375);">Pitch</span>
<svg class="k" style="left:693.5px;top:334.1px" width="34" height="34" viewBox="0 0 34 34"><circle cx="17" cy="17" r="15.6" fill="#3a3737" opacity="0.6"/><circle cx="17" cy="17" r="15" fill="url(#ring)"/><path d="M8.44 25.56 A12.1 12.1 0 0 1 18.68 5.02" stroke="url(#arc)" stroke-width="2" fill="none" stroke-linecap="butt"/><circle cx="17" cy="17" r="11.1" fill="#080808"/><circle cx="17" cy="17" r="10" fill="url(#rim)"/><circle cx="17" cy="16.8" r="9.1" fill="#4e4e4e"/></svg>
<span class="t" style="left:702.60px;top:370.86px;font-size:9.5px;line-height:9.5px;color:#d8d8d8;transform:scaleX(1.1509);">Vol</span>
<svg class="k" style="left:729.7px;top:334.1px" width="34" height="34" viewBox="0 0 34 34"><circle cx="17" cy="17" r="15.6" fill="#3a3737" opacity="0.6"/><circle cx="17" cy="17" r="15" fill="url(#ring)"/><path d="M8.44 25.56 A12.1 12.1 0 0 1 17.00 4.90" stroke="url(#arc)" stroke-width="2" fill="none" stroke-linecap="butt"/><circle cx="17" cy="17" r="11.1" fill="#080808"/><circle cx="17" cy="17" r="10" fill="url(#rim)"/><circle cx="17" cy="16.8" r="9.1" fill="#4e4e4e"/></svg>
<span class="t" style="left:739.60px;top:370.86px;font-size:9.5px;line-height:9.5px;color:#d8d8d8;transform:scaleX(0.9541);">Bal</span>
<div style="left:627px;top:395px;width:59px;height:17px;background:#000;"></div>
<div style="left:628px;top:396px;width:57px;height:15px;background:#5c5c5c;"></div>
<div style="left:629px;top:397px;width:55px;height:13px;background:linear-gradient(#3e3e3e,#262626);"></div>
<span class="t" style="left:644.50px;top:399.46px;font-size:9.5px;line-height:9.5px;color:#e4e4e4;transform:scaleX(0.9890);">Layer</span>
<div style="left:705px;top:395px;width:59px;height:17px;background:#000;"></div>
<div style="left:706px;top:396px;width:57px;height:15px;background:#5c5c5c;"></div>
<div style="left:707px;top:397px;width:55px;height:13px;background:linear-gradient(#3e3e3e,#262626);"></div>
<span class="t" style="left:711.30px;top:399.46px;font-size:9.5px;line-height:9.5px;color:#e4e4e4;transform:scaleX(0.9726);">Modulation</span>
</body></html>
